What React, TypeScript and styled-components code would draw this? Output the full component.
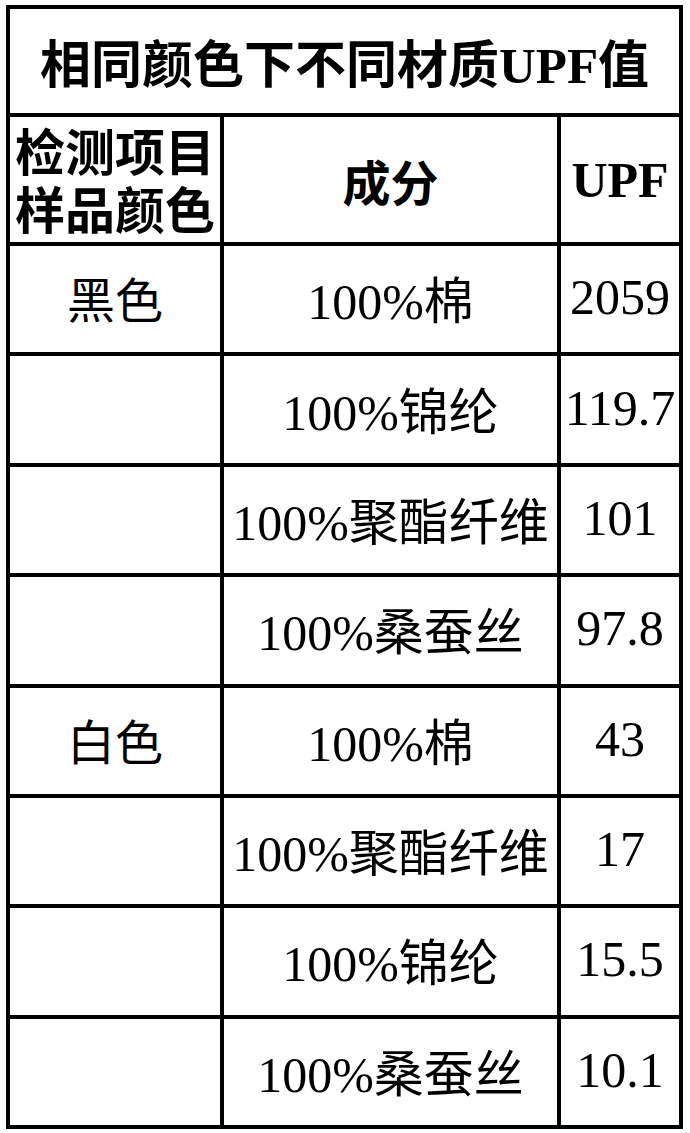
import React from 'react'
import styled, { createGlobalStyle } from 'styled-components'

const GlobalStyle = createGlobalStyle`
  html, body {
    margin: 0;
    padding: 0;
    background: #ffffff;
  }
  body {
    font-family: "Liberation Serif", "Noto Sans CJK SC", serif;
    color: #000000;
  }
`

const rows = [
    { color: '黑色', material: '100%棉', upf: '2059' },
    { color: '', material: '100%锦纶', upf: '119.7' },
    { color: '', material: '100%聚酯纤维', upf: '101' },
    { color: '', material: '100%桑蚕丝', upf: '97.8' },
    { color: '白色', material: '100%棉', upf: '43' },
    { color: '', material: '100%聚酯纤维', upf: '17' },
    { color: '', material: '100%锦纶', upf: '15.5' },
    { color: '', material: '100%桑蚕丝', upf: '10.1' },
]

export default function App() {
    return (
        <Page>
            <GlobalStyle />
            <Table>
                <Title>相同颜色下不同材质UPF值</Title>

                <HeadCell $stacked>
                    <span>检测项目</span>
                    <span>样品颜色</span>
                </HeadCell>
                <HeadCell>成分</HeadCell>
                <HeadCell $latin>UPF</HeadCell>

                {rows.map((row, i) => (
                    <React.Fragment key={i}>
                        <Cell $sans>{row.color}</Cell>
                        <Cell>{row.material}</Cell>
                        <Cell>{row.upf}</Cell>
                    </React.Fragment>
                ))}
            </Table>
        </Page>
    )
}

const Page = styled.div`
    padding: 5px 7px 4px 6px;
`

const Table = styled.div`
    box-sizing: border-box;
    width: 677px;
    height: 1124px;
    display: grid;
    grid-template-columns: 210px 333px 118px;
    grid-template-rows: 104px 125px repeat(8, 1fr);
    gap: 4px;
    padding: 4px;
    background: #000000;
`

const Title = styled.div`
    grid-column: 1 / span 3;
    background: #ffffff;
    display: flex;
    align-items: center;
    justify-content: center;
    font-size: 51px;
    font-weight: 700;
    white-space: nowrap;
`

const HeadCell = styled.div<{ $stacked?: boolean; $latin?: boolean }>`
    background: #ffffff;
    display: flex;
    flex-direction: ${p => (p.$stacked ? 'column' : 'row')};
    align-items: center;
    justify-content: center;
    font-family: ${p => (p.$latin ? '"Liberation Serif", serif' : '"Noto Sans CJK SC", sans-serif')};
    font-size: ${p => (p.$stacked ? '50px' : p.$latin ? '50px' : '48px')};
    line-height: ${p => (p.$stacked ? '58px' : 'normal')};
    font-weight: 700;
    white-space: nowrap;
    padding-bottom: ${p => (p.$stacked ? '3px' : '0')};
`

const Cell = styled.div<{ $sans?: boolean }>`
    background: #ffffff;
    display: flex;
    align-items: center;
    justify-content: center;
    font-family: ${p => (p.$sans ? '"Noto Sans CJK SC", sans-serif' : '"Liberation Serif", "Noto Sans CJK SC", serif')};
    font-size: ${p => (p.$sans ? '48px' : '50px')};
    font-weight: 400;
    white-space: nowrap;
    padding-bottom: 4px;
`
